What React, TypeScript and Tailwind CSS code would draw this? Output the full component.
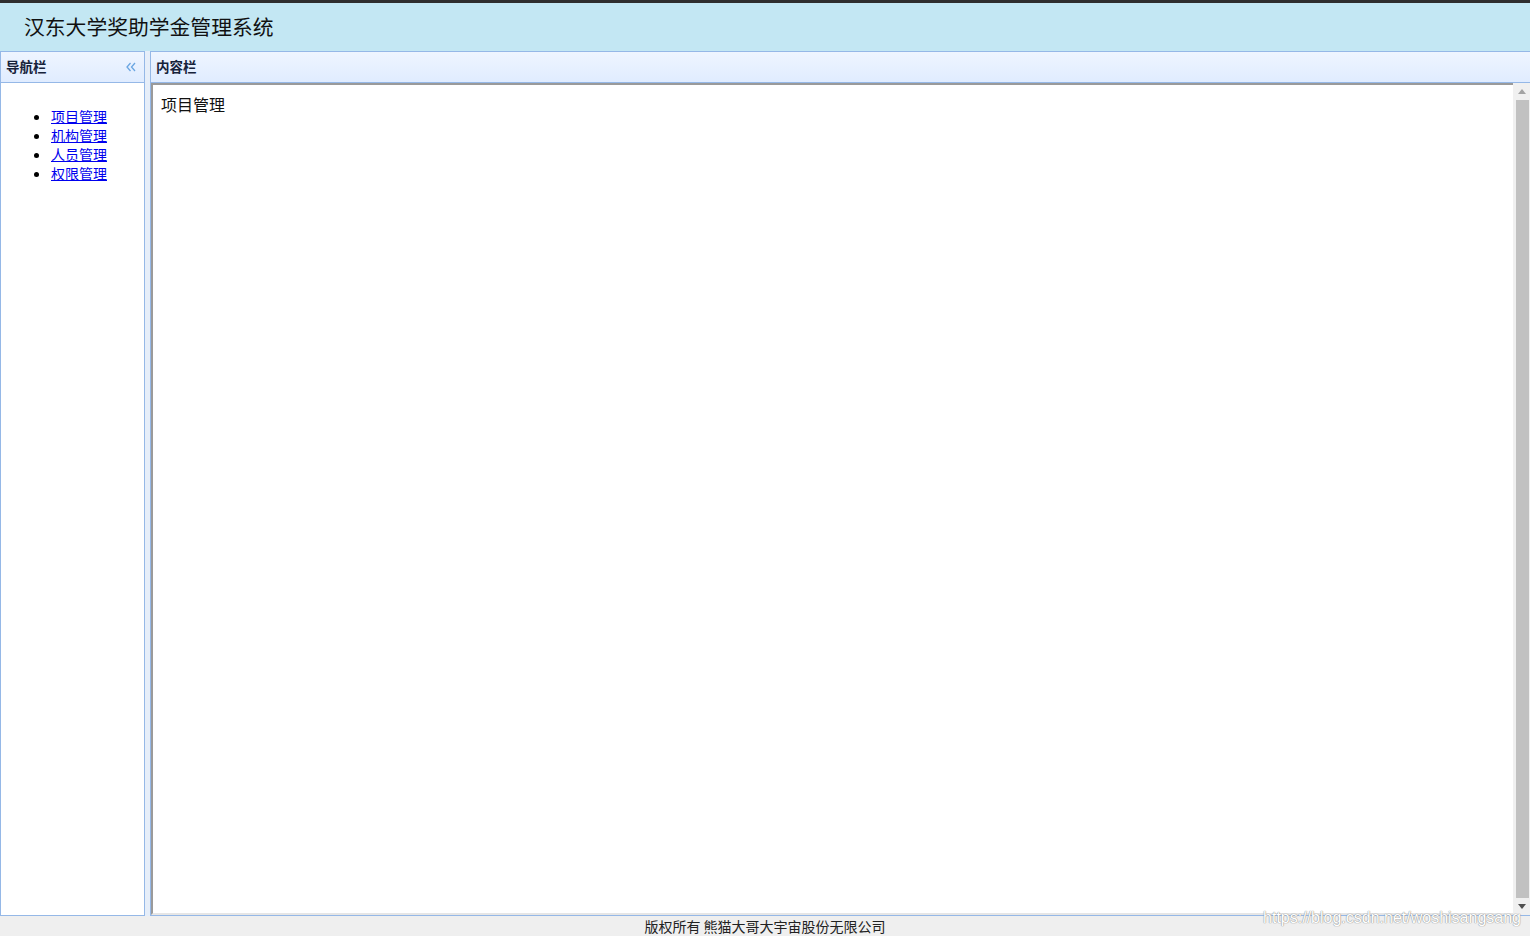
import React from "react";

const cjk = { fontFamily: '"Microsoft YaHei", "Noto Sans CJK SC", "Noto Sans", sans-serif' };

function DoubleChevron() {
  return (
    <svg width="10" height="10" viewBox="0 0 10 10" fill="none" stroke="#6aa6e2" strokeWidth="1.3">
      <polyline points="4.5,1 1,5 4.5,9" />
      <polyline points="9,1 5.5,5 9,9" />
    </svg>
  );
}

export default function App() {
  const items = ["项目管理", "机构管理", "人员管理", "权限管理"];
  return (
    <div className="relative w-[1530px] h-[936px] overflow-hidden flex flex-col bg-[#efefef]" style={cjk}>
      <div className="h-[3px] bg-[#2e2e2e] shrink-0" />
      <div className="h-[48px] shrink-0 bg-[#c3e7f3] flex items-center pl-[24px] pb-[1px]">
        <span className="text-[20.8px] leading-none text-[#111]">汉东大学奖助学金管理系统</span>
      </div>
      <div className="h-[865px] shrink-0 flex bg-[#e6eef9]">
        <div className="w-[145px] shrink-0 border border-[#95b8e7] flex flex-col bg-white">
          <div className="h-[31px] shrink-0 border-b border-[#95b8e7] bg-gradient-to-b from-[#eff5ff] to-[#e0ecff] flex items-center justify-between pl-[5px] pr-[8px]">
            <span className="text-[13.5px] leading-[16px] font-bold text-[#16223a] mb-[2px]">导航栏</span>
            <DoubleChevron />
          </div>
          <div className="flex-1 pt-[24px]">
            <ul className="list-disc pl-[50px] text-[14px] leading-[19px]">
              {items.map((t) => (
                <li key={t}>
                  <a className="text-[#0000ee] underline" href="#">{t}</a>
                </li>
              ))}
            </ul>
          </div>
        </div>
        <div className="w-[5px] shrink-0" />
        <div className="flex-1 border-l border-t border-b border-[#95b8e7] flex flex-col bg-white">
          <div className="h-[31px] shrink-0 border-b border-[#95b8e7] bg-gradient-to-b from-[#eff5ff] to-[#e0ecff] flex items-center pl-[5px]">
            <span className="text-[13.5px] leading-[16px] font-bold text-[#16223a] mb-[2px]">内容栏</span>
          </div>
          <div className="flex-1 flex">
            <div className="flex-1 border-t-2 border-l-2 border-b-2 border-t-[#9a9a9a] border-l-[#9a9a9a] border-b-[#e6e6e6] bg-white p-[8px]">
              <div className="text-[16px] leading-[22px] text-[#111]">项目管理</div>
            </div>
            <div className="w-[17px] shrink-0 bg-[#f0f0f0] flex flex-col items-center">
              <div className="h-[17px] flex items-center justify-center">
                <svg width="8" height="5" viewBox="0 0 8 5"><polygon points="4,0 8,5 0,5" fill="#a3a3a3" /></svg>
              </div>
              <div className="flex-1 w-[13px] ml-[2px] bg-[#c1c1c1]" />
              <div className="h-[17px] flex items-center justify-center">
                <svg width="8" height="5" viewBox="0 0 8 5"><polygon points="0,0 8,0 4,5" fill="#505050" /></svg>
              </div>
            </div>
          </div>
        </div>
      </div>
      <div className="h-[20px] shrink-0 bg-[#efefef] flex items-center justify-center">
        <span className="text-[14px] leading-[20px] text-[#222]">版权所有 熊猫大哥大宇宙股份无限公司</span>
      </div>
      <div
        className="absolute right-[9px] bottom-[8px] text-[16px] leading-[20px] text-white [text-shadow:0_0_1px_#8a8a8a,0_0_1px_#8a8a8a]"
        style={{ fontFamily: '"Liberation Sans", Arial, sans-serif' }}
      >
        https://blog.csdn.net/woshisangsang
      </div>
    </div>
  );
}
